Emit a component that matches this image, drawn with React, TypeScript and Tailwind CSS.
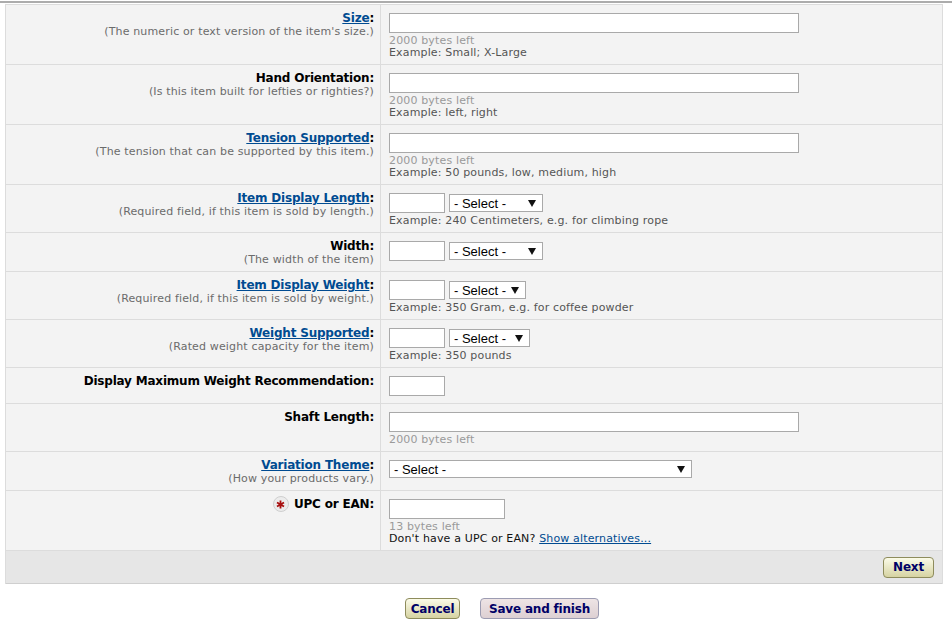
import React from "react";

const font = { fontFamily: '"DejaVu Sans", Verdana, sans-serif' };

type Row = {
  label: string;
  link?: boolean;
  required?: boolean;
  desc?: string;
  field: React.ReactNode;
  bytes?: string;
  example?: React.ReactNode;
};

function TextBox({ w }: { w: string }) {
  return <div className={`h-[20px] border border-[#a9a9a9] bg-white ${w}`} />;
}

function Select({ w }: { w: string }) {
  return (
    <div
      className={`flex h-[18px] items-center justify-between border border-[#a9a9a9] bg-white pl-[4px] pr-[6px] text-[13px] leading-none text-black ${w}`}
      style={{ fontFamily: '"Liberation Sans", Arial, sans-serif' }}
    >
      <span>- Select -</span>
      <svg width="8" height="7" viewBox="0 0 8 7">
        <path d="M0 0h8L4 7z" fill="#111" />
      </svg>
    </div>
  );
}

function Unit({ sel }: { sel: string }) {
  return (
    <div className="flex items-center gap-[4px]">
      <TextBox w="w-[56px]" />
      <Select w={sel} />
    </div>
  );
}

const rows: Row[] = [
  {
    label: "Size",
    link: true,
    desc: "(The numeric or text version of the item's size.)",
    field: <TextBox w="w-[410px]" />,
    bytes: "2000 bytes left",
    example: "Example: Small; X-Large",
  },
  {
    label: "Hand Orientation",
    desc: "(Is this item built for lefties or righties?)",
    field: <TextBox w="w-[410px]" />,
    bytes: "2000 bytes left",
    example: "Example: left, right",
  },
  {
    label: "Tension Supported",
    link: true,
    desc: "(The tension that can be supported by this item.)",
    field: <TextBox w="w-[410px]" />,
    bytes: "2000 bytes left",
    example: "Example: 50 pounds, low, medium, high",
  },
  {
    label: "Item Display Length",
    link: true,
    desc: "(Required field, if this item is sold by length.)",
    field: <Unit sel="w-[94px]" />,
    example: "Example: 240 Centimeters, e.g. for climbing rope",
  },
  {
    label: "Width",
    desc: "(The width of the item)",
    field: <Unit sel="w-[94px]" />,
  },
  {
    label: "Item Display Weight",
    link: true,
    desc: "(Required field, if this item is sold by weight.)",
    field: <Unit sel="w-[77px]" />,
    example: "Example: 350 Gram, e.g. for coffee powder",
  },
  {
    label: "Weight Supported",
    link: true,
    desc: "(Rated weight capacity for the item)",
    field: <Unit sel="w-[81px]" />,
    example: "Example: 350 pounds",
  },
  {
    label: "Display Maximum Weight Recommendation",
    field: <TextBox w="w-[56px]" />,
  },
  {
    label: "Shaft Length",
    field: <TextBox w="w-[410px]" />,
    bytes: "2000 bytes left",
  },
  {
    label: "Variation Theme",
    link: true,
    desc: "(How your products vary.)",
    field: <Select w="w-[303px]" />,
  },
  {
    label: "UPC or EAN",
    required: true,
    field: <TextBox w="w-[116px]" />,
    bytes: "13 bytes left",
    example: (
      <span className="text-[#111]">
        Don't have a UPC or EAN?{" "}
        <a className="text-[#004b91] underline">Show alternatives...</a>
      </span>
    ),
  },
];

function Button({
  children,
  tone,
  w,
}: {
  children: React.ReactNode;
  tone: "olive" | "rose";
  w: string;
}) {
  const cls =
    tone === "olive"
      ? "border-[#8e8c5c] bg-gradient-to-b from-[#fbfbe8] to-[#d6d3a2]"
      : "border-[#9c9cb2] bg-gradient-to-b from-[#eee4e5] to-[#ddd0d3]";
  return (
    <button
      className={`flex h-[21px] items-center justify-center rounded-[4px] border text-[12px] font-bold leading-none tracking-[-0.2px] text-[#000066] ${w} ${cls}`}
    >
      {children}
    </button>
  );
}

export default function App() {
  return (
    <div className="min-h-[630px] bg-white pt-px" style={font}>
      <div className="border-t-2 border-[#acacac]" />
      <div className="ml-[5px] mr-[9px] mt-px border-x border-t border-[#dcdcdc] bg-[#f3f3f3]">
        {rows.map((r) => {
          const hasNote = Boolean(r.bytes || r.example);
          return (
            <div key={r.label} className="grid grid-cols-[375px_1fr] border-b border-[#dcdcdc]">
              <div className="border-r border-[#dcdcdc] pb-[5px] pr-[6px] pt-[5px] text-right">
                <div className="flex items-center justify-end gap-[5px] text-[12px] font-bold leading-[16px] tracking-[-0.2px] text-black">
                  {r.required && (
                    <span className="flex h-[16px] w-[16px] items-center justify-center rounded-full border border-[#cfcfcf] bg-[#ececec]">
                      <svg width="9" height="9" viewBox="0 0 10 10">
                        <path
                          d="M5 0.5v9M1.1 2.75l7.8 4.5M1.1 7.25l7.8-4.5"
                          stroke="#a81010"
                          strokeWidth="2"
                        />
                      </svg>
                    </span>
                  )}
                  <span>
                    {r.link ? (
                      <a className="text-[#004b91] underline">{r.label}</a>
                    ) : (
                      r.label
                    )}
                    :
                  </span>
                </div>
                {r.desc && (
                  <div className="text-[11px] leading-[12px] tracking-[0.15px] text-[#6b6b6b]">
                    {r.desc}
                  </div>
                )}
              </div>
              <div className={`pl-[8px] pt-[8px] ${hasNote ? "pb-[5px]" : "pb-[7px]"}`}>
                {r.field}
                {hasNote && (
                  <div className="mt-[2px]">
                    {r.bytes && (
                      <div className="text-[11px] leading-[12px] tracking-[0.15px] text-[#9a9a9a]">
                        {r.bytes}
                      </div>
                    )}
                    {r.example && (
                      <div className="text-[11px] leading-[12px] tracking-[0.15px] text-[#555]">
                        {r.example}
                      </div>
                    )}
                  </div>
                )}
              </div>
            </div>
          );
        })}
        <div className="flex h-[33px] items-center justify-end border-b border-[#cfcfcf] bg-[#e6e6e6] pr-[8px]">
          <Button tone="olive" w="w-[51px]">
            Next
          </Button>
        </div>
      </div>
      <div className="flex gap-[20px] pl-[405px] pt-[14px]">
        <Button tone="olive" w="w-[55px]">
          Cancel
        </Button>
        <Button tone="rose" w="w-[119px]">
          Save and finish
        </Button>
      </div>
    </div>
  );
}
